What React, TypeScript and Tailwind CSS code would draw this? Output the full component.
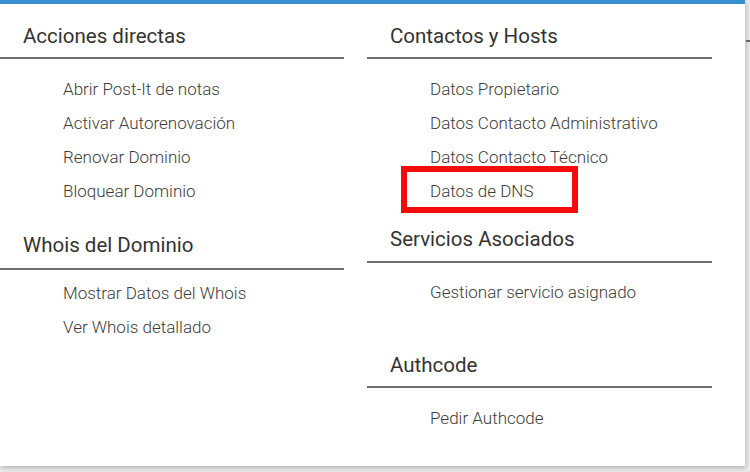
const font = { fontFamily: "Roboto, 'Open Sans', sans-serif" };

type Item = string;

function Heading({ title, mt, pl }: { title: string; mt: string; pl: string }) {
  return (
    <div className={`${mt} ${pl} text-[20.5px] leading-[24px] text-[#333]`}>{title}</div>
  );
}

function Rule({ mt, w }: { mt: string; w: string }) {
  return <div className={`${mt} ${w} h-[2px] bg-[#6f6f6f]`} />;
}

function List({ items, pt, pl }: { items: Item[]; pt: string; pl: string }) {
  return (
    <ul className={`${pt} ${pl}`}>
      {items.map((it) => (
        <li key={it} className="h-[34px] flex items-center text-[17px] font-light text-[#3c3c3c]">
          {it}
        </li>
      ))}
    </ul>
  );
}

export default function App() {
  return (
    <div className="w-[750px] h-[472px] bg-[#ececec] flex flex-row" style={font}>
      <div className="w-[745px] h-[466px] bg-white border-t-4 border-[#3a8fd1] shadow-[1px_2px_5px_rgba(0,0,0,0.25)] flex flex-row">
        {/* columna izquierda */}
        <div className="w-[367px] flex flex-col">
          <Heading title="Acciones directas" mt="mt-[20px]" pl="pl-[23px]" />
          <Rule mt="mt-[9px]" w="w-[344px]" />
          <List
            pt="pt-[14px]"
            pl="pl-[63px]"
            items={["Abrir Post-It de notas", "Activar Autorenovación", "Renovar Dominio", "Bloquear Dominio"]}
          />
          <Heading title="Whois del Dominio" mt="mt-[24px]" pl="pl-[23px]" />
          <Rule mt="mt-[11px]" w="w-[344px]" />
          <List pt="pt-[7px]" pl="pl-[63px]" items={["Mostrar Datos del Whois", "Ver Whois detallado"]} />
        </div>

        {/* columna derecha */}
        <div className="w-[345px] flex flex-col">
          <Heading title="Contactos y Hosts" mt="mt-[20px]" pl="pl-[23px]" />
          <Rule mt="mt-[9px]" w="w-[345px]" />
          <div className="relative">
            <List
              pt="pt-[14px]"
              pl="pl-[63px]"
              items={["Datos Propietario", "Datos Contacto Administrativo", "Datos Contacto Técnico", "Datos de DNS"]}
            />
            {/* recuadro rojo de resaltado */}
            <div className="absolute left-[34px] top-[107px] w-[177px] h-[47px] border-[6px] border-[#f40c0c]" />
          </div>
          <Heading title="Servicios Asociados" mt="mt-[18px]" pl="pl-[23px]" />
          <Rule mt="mt-[10px]" w="w-[345px]" />
          <List pt="pt-[13px]" pl="pl-[63px]" items={["Gestionar servicio asignado"]} />
          <Heading title="Authcode" mt="mt-[43px]" pl="pl-[23px]" />
          <Rule mt="mt-[9px]" w="w-[345px]" />
          <List pt="pt-[14px]" pl="pl-[63px]" items={["Pedir Authcode"]} />
        </div>
      </div>
      <div className="w-[5px] flex flex-col">
        <div className="mt-[40px] ml-[1px] w-[4px] h-[2px] bg-[#666]" />
      </div>
    </div>
  );
}
